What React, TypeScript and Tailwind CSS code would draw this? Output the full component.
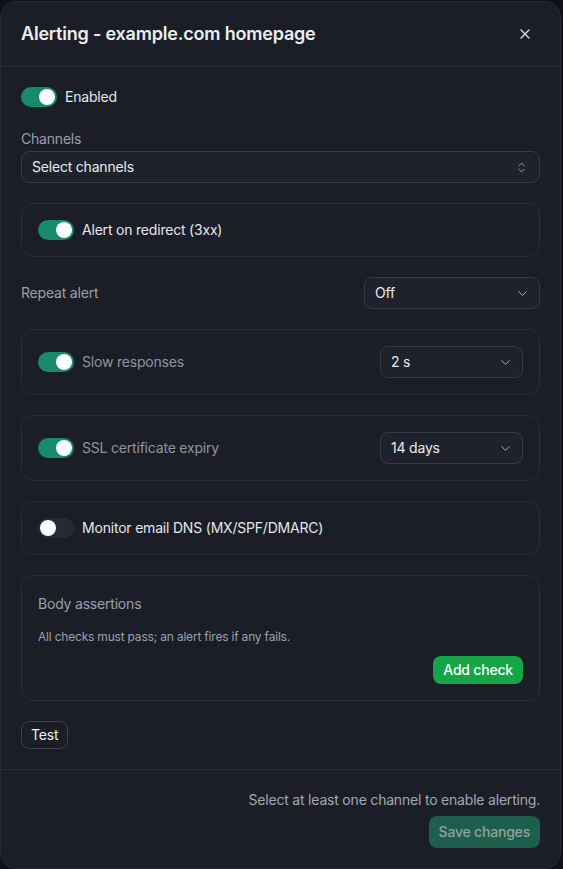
import React from 'react';
import { X, ChevronDown, ChevronsUpDown } from 'lucide-react';

const Toggle: React.FC<{ on: boolean }> = ({ on }) => (
    <span className={`inline-flex h-5 w-9 shrink-0 items-center rounded-full p-0.5 ${on ? 'bg-[#178a69] justify-end' : 'bg-[#262a34] justify-start'}`}>
        <span className="h-4 w-4 rounded-full bg-white" />
    </span>
);

const Select: React.FC<{ value: string; className?: string }> = ({ value, className }) => (
    <div className={`flex h-8 items-center justify-between rounded-lg border border-[#353a46] bg-[#1f222c] pl-[10px] pr-[9px] text-sm text-[#e9ebf0] ${className ?? ''}`}>
        <span>{value}</span>
        <ChevronDown size={15} strokeWidth={1.6} className="text-[#a5abb8]" />
    </div>
);

export default function App() {
    return (
        <div className="min-h-[869px] bg-[#0f1116] pt-px tracking-[-0.2px]" style={{ fontFamily: 'Inter, "Noto Sans", sans-serif' }}>
            <div className="flex w-[561px] flex-col rounded-2xl border border-[#262a33] bg-[#1b1e27]">
                <div className="flex items-center justify-between border-b border-[#2a2e38] px-5 py-[18px]">
                    <h2 className="text-lg font-semibold text-[#eceef2]">Alerting - example.com homepage</h2>
                    <X size={16} strokeWidth={2} className="mr-[7px] text-[#d5d8df]" />
                </div>

                <div className="flex flex-col gap-5 p-5">
                    <label className="flex items-center gap-2 text-sm text-[#e4e6eb]">
                        <Toggle on />
                        Enabled
                    </label>

                    <div className="mt-[2px]">
                        <div className="mb-[2px] text-sm text-[#9aa0ad]">Channels</div>
                        <div className="flex h-8 items-center justify-between rounded-lg border border-[#353a46] bg-[#1f222c] pl-[10px] pr-[11px] text-sm text-[#e9ebf0]">
                            <span>Select channels</span>
                            <ChevronsUpDown size={13} strokeWidth={1.6} className="text-[#a5abb8]" />
                        </div>
                    </div>

                    <div className="flex items-center gap-2 rounded-xl border border-[#292d37] p-4 text-sm text-[#e4e6eb]">
                        <Toggle on />
                        Alert on redirect (3xx)
                    </div>

                    <div className="flex items-center justify-between">
                        <span className="text-sm text-[#9aa0ad]">Repeat alert</span>
                        <Select value="Off" className="w-[176px]" />
                    </div>

                    <div className="flex items-center justify-between rounded-xl border border-[#292d37] p-4">
                        <div className="flex items-center gap-2 text-sm text-[#8f95a2]">
                            <Toggle on />
                            Slow responses
                        </div>
                        <Select value="2 s" className="w-[143px]" />
                    </div>

                    <div className="flex items-center justify-between rounded-xl border border-[#292d37] p-4">
                        <div className="flex items-center gap-2 text-sm text-[#8f95a2]">
                            <Toggle on />
                            SSL certificate expiry
                        </div>
                        <Select value="14 days" className="w-[143px]" />
                    </div>

                    <div className="flex items-center gap-2 rounded-xl border border-[#292d37] p-4 text-sm text-[#e4e6eb]">
                        <Toggle on={false} />
                        Monitor email DNS (MX/SPF/DMARC)
                    </div>

                    <div className="rounded-xl border border-[#292d37] p-4">
                        <div className="mt-[2px] text-sm text-[#9aa0ad]">Body assertions</div>
                        <p className="mt-[15px] text-xs text-[#9aa0ad]">All checks must pass; an alert fires if any fails.</p>
                        <div className="mt-[11px] flex justify-end">
                            <button className="h-7 rounded-lg bg-[#13a546] px-[10px] text-sm font-medium text-white">Add check</button>
                        </div>
                    </div>

                    <div>
                        <button className="h-7 rounded-lg border border-[#3d424e] px-[9px] text-sm text-[#eceef2]">Test</button>
                    </div>
                </div>

                <div className="flex flex-col items-end gap-[6px] border-t border-[#2a2e38] px-5 pb-5 pt-5">
                    <p className="text-sm text-[#a2a8b4]">Select at least one channel to enable alerting.</p>
                    <button className="h-8 rounded-lg bg-[#1b5f4c] px-[10px] text-sm font-medium text-[#93a39d]">Save changes</button>
                </div>
            </div>
        </div>
    );
}
